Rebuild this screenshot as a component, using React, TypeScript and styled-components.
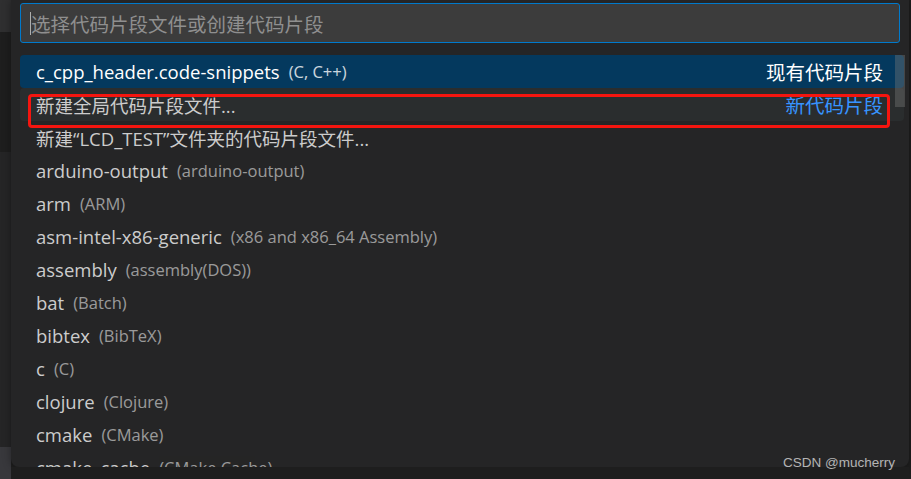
import React from "react";
import styled, { createGlobalStyle } from "styled-components";

const GlobalStyle = createGlobalStyle`
  html, body {
    margin: 0;
    padding: 0;
    background: #1e1e1e;
    overflow: hidden;
  }
  body {
    font-family: "Open Sans", "Noto Sans CJK SC", sans-serif;
  }
`;

type Item = {
  label: string;
  description?: string;
  detail?: string;
  selected?: boolean;
  hovered?: boolean;
  accent?: boolean;
};

const items: Item[] = [
  {
    label: "c_cpp_header.code-snippets",
    description: "(C, C++)",
    detail: "现有代码片段",
    selected: true,
  },
  { label: "新建全局代码片段文件...", detail: "新代码片段", hovered: true, accent: true },
  { label: "新建“LCD_TEST”文件夹的代码片段文件..." },
  { label: "arduino-output", description: "(arduino-output)" },
  { label: "arm", description: "(ARM)" },
  { label: "asm-intel-x86-generic", description: "(x86 and x86_64 Assembly)" },
  { label: "assembly", description: "(assembly(DOS))" },
  { label: "bat", description: "(Batch)" },
  { label: "bibtex", description: "(BibTeX)" },
  { label: "c", description: "(C)" },
  { label: "clojure", description: "(Clojure)" },
  { label: "cmake", description: "(CMake)" },
  { label: "cmake_cache", description: "(CMake Cache)" },
];

const Page = styled.div`
  display: flex;
  width: 911px;
  height: 479px;
  position: relative;
`;

const SideStrip = styled.div`
  width: 11px;
  display: flex;
  flex-direction: column;
  flex-shrink: 0;
`;

const StripBlock = styled.div<{ $h: number; $bg: string }>`
  height: ${(p) => p.$h}px;
  background: ${(p) => p.$bg};
  flex-shrink: 0;
`;

const StripRest = styled.div`
  flex: 1;
  background: #38383c;
`;

const Main = styled.div`
  flex: 1;
  display: flex;
  flex-direction: column;
  padding-right: 2px;
`;

const Widget = styled.div`
  height: 467px;
  background: #252526;
  border-radius: 0 0 8px 8px;
  box-shadow: 0 0 8px rgba(0, 0, 0, 0.36);
  padding: 3px 5px 0 9px;
  box-sizing: border-box;
  display: flex;
  flex-direction: column;
  overflow: hidden;
`;

const InputBox = styled.div`
  height: 40px;
  box-sizing: border-box;
  border: 1px solid #007acc;
  border-radius: 3px;
  background: #3c3c3c;
  display: flex;
  align-items: center;
  padding-left: 9px;
  margin-right: 4px;
  flex-shrink: 0;
`;

const Caret = styled.span`
  width: 1px;
  height: 23px;
  background: #aeafad;
  flex-shrink: 0;
`;

const Placeholder = styled.span`
  color: #8f8f8f;
  font-size: 19.5px;
  font-family: "Noto Sans CJK SC", sans-serif;
`;

const ListArea = styled.div`
  margin-top: 12px;
  position: relative;
  flex: 1;
`;

const Row = styled.div<{ $selected?: boolean; $hovered?: boolean }>`
  height: 33px;
  display: flex;
  align-items: center;
  padding: 0 21px 0 16px;
  border-radius: 4px;
  background: ${(p) =>
    p.$selected ? "#04395e" : p.$hovered ? "#2a2d2e" : "transparent"};
  color: ${(p) => (p.$selected ? "#ffffff" : "#cccccc")};
  white-space: nowrap;
`;

const Label = styled.span`
  font-size: 18.5px;
`;

const Description = styled.span<{ $selected?: boolean }>`
  font-size: 16.5px;
  margin-left: 9px;
  opacity: ${(p) => (p.$selected ? 0.8 : 0.7)};
`;

const Detail = styled.span<{ $accent?: boolean }>`
  margin-left: auto;
  font-size: 19.5px;
  font-family: "Noto Sans CJK SC", sans-serif;
  color: ${(p) => (p.$accent ? "#3794ff" : "#ffffff")};
`;

const ScrollThumb = styled.div`
  position: absolute;
  top: 0;
  right: -1px;
  width: 10px;
  height: 52px;
  background: rgba(121, 121, 121, 0.4);
`;

const Highlight = styled.div`
  position: absolute;
  left: 8px;
  top: 39px;
  width: 862px;
  height: 34px;
  box-sizing: border-box;
  border: 3px solid #f5150f;
  border-radius: 4px;
  pointer-events: none;
`;

const Below = styled.div`
  flex: 1;
  background: #1e1e1e;
`;

const Watermark = styled.div`
  position: absolute;
  right: 16px;
  bottom: 9px;
  color: #b4b4b4;
  font-family: "Liberation Sans", Arial, sans-serif;
  font-size: 13.5px;
`;

const App = () => {
  return (
    <>
      <GlobalStyle />
      <Page>
        <SideStrip>
          <StripBlock $h={32} $bg="#2f2f30" />
          <StripBlock $h={120} $bg="#1e1e1e" />
          <StripBlock $h={295} $bg="#252526" />
          <StripRest />
        </SideStrip>
        <Main>
          <Widget>
            <InputBox>
              <Caret />
              <Placeholder>选择代码片段文件或创建代码片段</Placeholder>
            </InputBox>
            <ListArea>
              {items.map((it) => (
                <Row key={it.label} $selected={it.selected} $hovered={it.hovered}>
                  <Label>{it.label}</Label>
                  {it.description && (
                    <Description $selected={it.selected}>{it.description}</Description>
                  )}
                  {it.detail && <Detail $accent={it.accent}>{it.detail}</Detail>}
                </Row>
              ))}
              <ScrollThumb />
              <Highlight />
            </ListArea>
          </Widget>
          <Below />
        </Main>
        <Watermark>CSDN @mucherry</Watermark>
      </Page>
    </>
  );
};

export default App;
